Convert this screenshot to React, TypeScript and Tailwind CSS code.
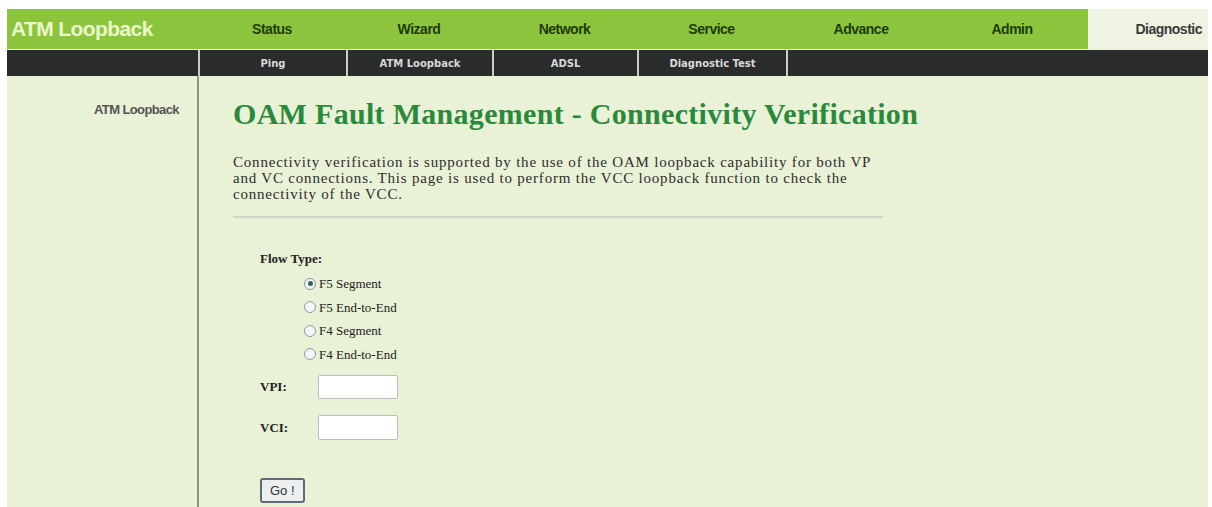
import React from "react";

const topItems = [
  { label: "Status", w: "w-[148px]" },
  { label: "Wizard", w: "w-[146px]" },
  { label: "Network", w: "w-[145px]" },
  { label: "Service", w: "w-[149px]" },
  { label: "Advance", w: "w-[150px]" },
  { label: "Admin", w: "w-[152px]" },
];

const subItems = [
  { label: "Ping", w: "w-[148px]" },
  { label: "ATM Loopback", w: "w-[146px]" },
  { label: "ADSL", w: "w-[145px]" },
  { label: "Diagnostic Test", w: "w-[149px]" },
];

const flows = [
  { label: "F5 Segment", checked: true },
  { label: "F5 End-to-End", checked: false },
  { label: "F4 Segment", checked: false },
  { label: "F4 End-to-End", checked: false },
];

function Radio({ checked }: { checked: boolean }) {
  return (
    <span className="inline-flex items-center justify-center w-[12px] h-[12px] rounded-full border border-[#8a9aa8] bg-[#f4f6f8] mr-[3px]">
      {checked && <span className="w-[5px] h-[5px] rounded-full bg-[#2e6b4a]" />}
    </span>
  );
}

export default function App() {
  return (
    <div className="w-[1212px] h-[507px] bg-white overflow-hidden pt-[9px] pl-[7px]">
      <div className="w-[1201px] h-[498px] flex flex-col bg-[#e9f1d6] overflow-hidden">
        {/* top bar */}
        <div className="flex shrink-0 h-[40px] bg-[#8cc53d] font-['Liberation_Sans',Arial,sans-serif]">
          <div className="w-[191px] flex items-center pl-[4px] text-[21px] font-bold tracking-[-0.6px] text-[#eaf8cc]">
            ATM Loopback
          </div>
          {topItems.map((it) => (
            <div
              key={it.label}
              className={`${it.w} flex items-center justify-center text-[14px] font-bold tracking-[-0.5px] text-[#1e3a06]`}
            >
              {it.label}
            </div>
          ))}
          <div className="flex-1 flex items-center justify-end pr-[6px] bg-[#eef3e2] text-[14px] font-bold tracking-[-0.5px] text-[#3c3c3c]">
            Diagnostic
          </div>
        </div>
        {/* sub bar */}
        <div className="flex shrink-0 h-[26px] mt-[1px] bg-[#2a2b2b] font-['DejaVu_Sans',Verdana,sans-serif]">
          <div className="w-[191px]" />
          {subItems.map((it) => (
            <div
              key={it.label}
              className={`${it.w} flex items-center justify-center border-l-2 border-[#c9cec4] text-[10px] font-bold text-[#d9d9d9]`}
            >
              {it.label}
            </div>
          ))}
          <div className="flex-1 border-l-2 border-[#c9cec4]" />
        </div>
        {/* body */}
        <div className="flex flex-1 min-h-0">
          <div className="w-[190px] pt-[24px] pr-[18px] text-right font-['Liberation_Sans',Arial,sans-serif] text-[13px] font-bold tracking-[-0.6px] text-[#555]">
            ATM Loopback
          </div>
          <div className="w-[2px] bg-[#8f948a]" />
          <div className="flex-1 pl-[34px] pt-[22px] font-['Liberation_Serif','Times_New_Roman',serif]">
            <h1 className="text-[30px] leading-[32px] font-bold tracking-[0.3px] text-[#2a8a3c]">
              OAM Fault Management - Connectivity Verification
            </h1>
            <p className="mt-[24px] text-[15px] leading-[16px] text-[#2e2e2e] tracking-[0.8px] whitespace-nowrap">
              Connectivity verification is supported by the use of the OAM loopback capability for both VP
              <br />
              and VC connections. This page is used to perform the VCC loopback function to check the
              <br />
              connectivity of the VCC.
            </p>
            <div className="mt-[14px] w-[650px] h-[2px] bg-[#cfd4c6]" />
            <div className="mt-[32px] pl-[27px] text-[13px] text-[#222]">
              <div className="font-bold leading-[18px]">Flow Type:</div>
              <div className="mt-[4px] pl-[44px] flex flex-col">
                {flows.map((f) => (
                  <div key={f.label} className="h-[23.5px] flex items-center text-[13px]">
                    <Radio checked={f.checked} />
                    {f.label}
                  </div>
                ))}
              </div>
              <div className="mt-[9px] flex items-center h-[24px]">
                <span className="w-[58px] font-bold">VPI:</span>
                <div className="w-[80px] h-[24px] bg-white border border-[#b8bfc6] rounded-[2px]" />
              </div>
              <div className="mt-[16px] flex items-center h-[25px]">
                <span className="w-[58px] font-bold">VCI:</span>
                <div className="w-[80px] h-[25px] bg-white border border-[#b8bfc6] rounded-[2px]" />
              </div>
              <button className="mt-[38px] h-[25px] px-[8px] border-2 border-[#5b6b7a] rounded-[3px] bg-[#eceef0] font-['Liberation_Sans',Arial,sans-serif] text-[13px] text-[#333]">
                Go !
              </button>
            </div>
          </div>
        </div>
      </div>
    </div>
  );
}
